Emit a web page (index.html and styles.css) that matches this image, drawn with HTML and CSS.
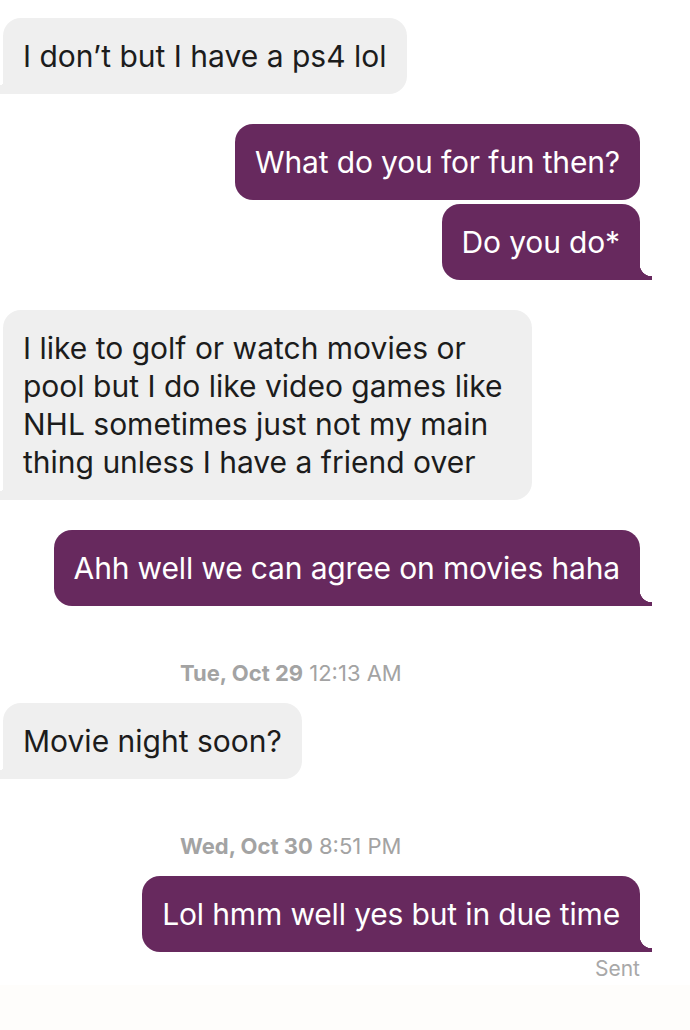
FILE: index.html
```html
<!DOCTYPE html>
<html lang="en">

<head>
    <meta charset="utf-8">
    <meta name="viewport" content="width=device-width, initial-scale=1.0">
    <title>Chat</title>
    <link rel="stylesheet" href="styles.css">
</head>

<body>
    <main class="chat">
        <div class="msg them">I don’t but I have a ps4 lol</div>

        <div class="msg me first">What do you for fun then?</div>
        <div class="msg me tail">Do you do*</div>

        <div class="msg them">I like to golf or watch movies or pool but I do like video games like NHL sometimes just not my main thing unless I have a friend over</div>

        <div class="msg me tail">Ahh well we can agree on movies haha</div>

        <p class="stamp"><b>Tue, Oct 29</b> 12:13 AM</p>

        <div class="msg them">Movie night soon?</div>

        <p class="stamp"><b>Wed, Oct 30</b> 8:51 PM</p>

        <div class="msg me tail">Lol hmm well yes but in due time</div>
        <p class="status">Sent</p>
    </main>
    <footer class="bottom"></footer>
</body>

</html>
```

FILE: styles.css
```css
body {
    margin: 0;
    background: #ffffff;
    font-family: "Inter", "Lato", sans-serif;
    color: #1c1c1c;
}

.chat {
    display: flex;
    flex-direction: column;
    padding: 18px 50px 4px 3px;
}

.msg {
    position: relative;
    box-sizing: border-box;
    font-size: 30px;
    line-height: 38px;
    padding: 19px 20px;
    border-radius: 18px;
    margin-bottom: 30px;
}

.them {
    align-self: flex-start;
    max-width: 529px;
    background: #efefef;
    border-bottom-left-radius: 0;
}

/* little flare at the bottom corner */
.them::after {
    content: "";
    position: absolute;
    left: -3px;
    bottom: 0;
    width: 3px;
    height: 12px;
    background: radial-gradient(circle at 0 0, transparent 3px, #efefef 3.5px);
}

.me {
    align-self: flex-end;
    max-width: 620px;
    background: #67295e;
    color: #ffffff;
    letter-spacing: -0.15px;
}

.me.first {
    margin-bottom: 4px;
}

.me.tail {
    border-bottom-right-radius: 0;
}

.me.tail::after {
    content: "";
    position: absolute;
    right: -12px;
    bottom: 0;
    width: 12px;
    height: 16px;
    background: radial-gradient(circle at 100% 0, transparent 12px, #67295e 12.5px);
}

.stamp {
    margin: 23px 0 16px 177px;
    line-height: 28px;
    font-size: 22px;
    color: #a3a3a3;
}

.stamp b {
    font-weight: 700;
}

.status {
    align-self: flex-end;
    margin: -25px 0 0;
    line-height: 24px;
    font-size: 21px;
    color: #a8a8a8;
}

.bottom {
    height: 45px;
    background: #fefdfb;
}
```
